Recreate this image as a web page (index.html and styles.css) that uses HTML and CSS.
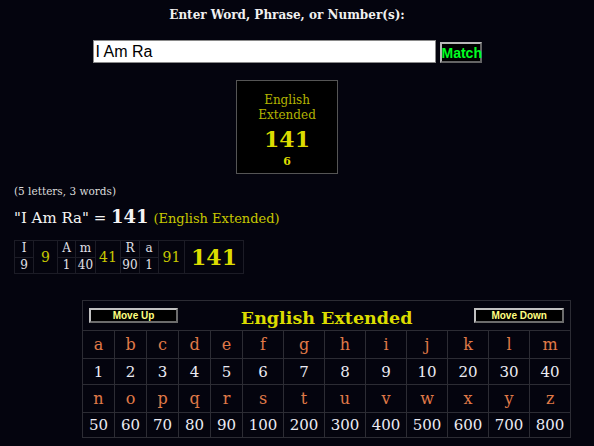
FILE: index.html
```html
<!DOCTYPE html>
<html lang="en">
<head>
	<meta charset="UTF-8">
	<title>Gematria Calculator</title>
	<link rel="stylesheet" href="styles.css">
</head>
<body>
	<div class="page">
		<h1 class="prompt">Enter Word, Phrase, or Number(s):</h1>

		<form class="search">
			<input class="phrase" type="text" value="I Am Ra">
			<button type="button" class="match">Match</button>
		</form>

		<div class="result-box">
			<p class="cipher-name">English<br>Extended</p>
			<p class="cipher-total">141</p>
			<p class="cipher-reduced">6</p>
		</div>

		<p class="count">(5 letters, 3 words)</p>
		<p class="summary">"I Am Ra" = <b class="big">141</b> <span class="cipher">(English Extended)</span></p>

		<table class="breakdown">
			<colgroup>
				<col class="c19"><col class="c24"><col class="c18">
				<col class="c20"><col class="c25"><col class="c19">
				<col class="c19"><col class="c26"><col class="c59">
			</colgroup>
			<tr>
				<td class="ch">I</td>
				<td class="sum" rowspan="2">9</td>
				<td class="ch">A</td>
				<td class="ch">m</td>
				<td class="sum" rowspan="2">41</td>
				<td class="ch">R</td>
				<td class="ch">a</td>
				<td class="sum" rowspan="2">91</td>
				<td class="total" rowspan="2">141</td>
			</tr>
			<tr>
				<td class="val">9</td>
				<td class="val">1</td>
				<td class="val">40</td>
				<td class="val">90</td>
				<td class="val">1</td>
			</tr>
		</table>

		<table class="cipher-table">
			<colgroup>
				<col class="narrow"><col class="narrow"><col class="narrow"><col class="narrow"><col class="narrow">
				<col><col><col><col><col><col><col><col>
			</colgroup>
			<tr class="head">
				<td colspan="13">
					<div class="head-bar">
						<button type="button" class="move up">Move Up</button>
						<h2>English Extended</h2>
						<button type="button" class="move down">Move Down</button>
					</div>
				</td>
			</tr>
			<tr class="letters">
				<td>a</td><td>b</td><td>c</td><td>d</td><td>e</td><td>f</td><td>g</td>
				<td>h</td><td>i</td><td>j</td><td>k</td><td>l</td><td>m</td>
			</tr>
			<tr class="values">
				<td>1</td><td>2</td><td>3</td><td>4</td><td>5</td><td>6</td><td>7</td>
				<td>8</td><td>9</td><td>10</td><td>20</td><td>30</td><td>40</td>
			</tr>
			<tr class="letters">
				<td>n</td><td>o</td><td>p</td><td>q</td><td>r</td><td>s</td><td>t</td>
				<td>u</td><td>v</td><td>w</td><td>x</td><td>y</td><td>z</td>
			</tr>
			<tr class="values last">
				<td>50</td><td>60</td><td>70</td><td>80</td><td>90</td><td>100</td><td>200</td>
				<td>300</td><td>400</td><td>500</td><td>600</td><td>700</td><td>800</td>
			</tr>
		</table>
	</div>
</body>
</html>
```

FILE: styles.css
```css
body {
	margin: 0;
	background-color: #04040e;
	font-family: "DejaVu Serif", serif;
	color: #e6e6ee;
}

.page {
	width: 546px;
	padding: 0 14px;
}

p {
	margin: 0;
}

.prompt {
	margin: 0;
	padding-top: 8px;
	height: 20px;
	text-align: center;
	font-size: 12px;
	font-weight: bold;
	color: #f0f0f0;
}

.search {
	display: flex;
	justify-content: center;
	align-items: flex-end;
	gap: 4px;
	margin: 12px 0 0 0;
	height: 23px;
}

.phrase {
	box-sizing: border-box;
	width: 343px;
	height: 23px;
	margin: 0;
	padding: 0 2px;
	border: 1px solid #8a8a8a;
	background: #fff;
	font-family: "Liberation Sans", sans-serif;
	font-size: 16px;
	color: #000;
}

.match {
	box-sizing: border-box;
	width: 42px;
	height: 21px;
	margin: 0;
	padding: 0;
	border: 2px outset #b8b8b8;
	background: #000;
	font-family: "Liberation Sans", sans-serif;
	font-weight: bold;
	font-size: 14px;
	color: #00ff22;
}

.result-box {
	box-sizing: border-box;
	width: 102px;
	height: 94px;
	margin: 17px auto 0 auto;
	padding-top: 12px;
	border: 1px solid #555;
	background: #000;
	text-align: center;
}

.cipher-name {
	font-size: 12px;
	line-height: 15px;
	color: #b4b400;
}

.cipher-total {
	font-size: 22px;
	font-weight: bold;
	line-height: 32px;
	color: #dcdc00;
}

.cipher-reduced {
	font-size: 11px;
	font-weight: bold;
	line-height: 13px;
	color: #dcdc00;
}

.count {
	margin-top: 10px;
	font-size: 10.5px;
	line-height: 14px;
	color: #dcdcdc;
}

.summary {
	margin-top: 8px;
	font-size: 15px;
	line-height: 21px;
	color: #f4f4f4;
}

.summary .big {
	font-size: 18px;
}

.summary .cipher {
	font-size: 13px;
	color: #c8c800;
}

.breakdown {
	margin-top: 11px;
	table-layout: fixed;
	width: 229px;
	border-collapse: collapse;
	height: 34px;
}

.c18 { width: 18px; }
.c19 { width: 19px; }
.c20 { width: 20px; }
.c24 { width: 24px; }
.c25 { width: 25px; }
.c26 { width: 26px; }
.c59 { width: 59px; }

.breakdown td {
	border: 1px solid #1c1c26;
	padding: 0;
	text-align: center;
	font-size: 12px;
	line-height: 15px;
	color: #e0e0e8;
	white-space: nowrap;
}

.breakdown .sum {
	font-size: 14px;
	color: #c8c800;
}

.breakdown .total {
	font-size: 22px;
	font-weight: bold;
	color: #dcdc00;
}

.cipher-table {
	margin: 26px 0 0 68px;
	width: 489px;
	table-layout: fixed;
	border-collapse: collapse;
}

.cipher-table col {
	width: 41px;
}

.cipher-table col.narrow {
	width: 32px;
}

.cipher-table td {
	border: 1px solid #2c2c34;
	padding: 0;
	text-align: center;
}

.head td {
	height: 29px;
}

.head-bar {
	display: grid;
	grid-template-columns: 1fr auto 1fr;
	align-items: center;
	padding: 0 6px;
}

.head-bar h2 {
	margin: 4px 0 0 0;
	font-size: 17.5px;
	font-weight: bold;
	color: #dcdc00;
}

.move {
	box-sizing: border-box;
	height: 15px;
	padding: 0;
	border: 2px outset #c0c0c0;
	background: #000;
	font-family: "Liberation Sans", sans-serif;
	font-weight: bold;
	font-size: 10px;
	line-height: 10px;
	color: #ffff80;
}

.move.up {
	width: 89px;
	justify-self: start;
}

.move.down {
	width: 90px;
	justify-self: end;
}

.letters td {
	height: 27px;
	font-size: 16px;
	color: #e07a48;
}

.values td {
	height: 25px;
	font-size: 15px;
	color: #ececf4;
}

.values.last td {
	height: 24px;
}
```
